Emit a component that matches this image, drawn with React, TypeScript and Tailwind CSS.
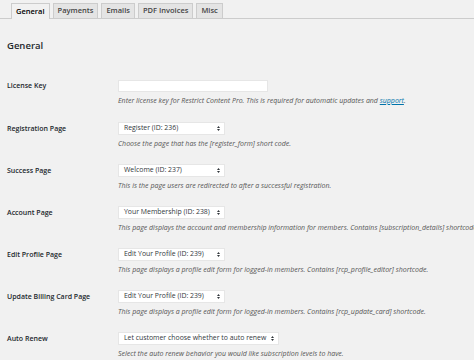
import React from "react";

const tabs = [
  { name: "General", active: true },
  { name: "Payments" },
  { name: "Emails" },
  { name: "PDF Invoices" },
  { name: "Misc" },
];

function Arrows() {
  return (
    <svg width="3" height="5" viewBox="0 0 3 5" className="shrink-0">
      <path d="M1.5 0 L3 2 L0 2 Z" fill="#32373c" />
      <path d="M1.5 5 L3 3 L0 3 Z" fill="#32373c" />
    </svg>
  );
}

function Select({ value, width }: { value: string; width: string }) {
  return (
    <div
      className={`h-[13px] ${width} bg-white border border-[#e6e6e6] flex items-center justify-between pl-[5px] pr-[4px] text-[6.9px] text-[#32373c] leading-none`}
    >
      <span className="whitespace-nowrap">{value}</span>
      <Arrows />
    </div>
  );
}

function Desc({ children }: { children: React.ReactNode }) {
  return (
    <div className="mt-[4px] text-[7px] italic leading-[9px] text-[#555] whitespace-nowrap">
      {children}
    </div>
  );
}

function Row({
  label,
  children,
}: {
  label: string;
  children: React.ReactNode;
}) {
  return (
    <div className="flex h-[42px]">
      <div className="w-[118px] shrink-0 pl-[7px] text-[7px] font-semibold leading-[13px] text-[#23282d] whitespace-nowrap">
        {label}
      </div>
      <div className="flex flex-col">{children}</div>
    </div>
  );
}

export default function App() {
  return (
    <div
      className="w-[474px] h-[360px] overflow-hidden bg-[#f1f1f1]"
      style={{ fontFamily: '"Open Sans", "Liberation Sans", sans-serif' }}
    >
      <div className="flex gap-[3px] pl-[11px] pt-[3px] border-b border-[#cccccc]">
        {tabs.map((t) => (
          <div
            key={t.name}
            className={
              t.active
                ? "h-[16px] px-[4px] -mb-px flex items-center border border-b-0 border-[#cccccc] bg-[#f1f1f1] text-[7.5px] font-semibold text-black whitespace-nowrap"
                : "h-[15px] px-[4px] flex items-center border border-b-0 border-[#cccccc] bg-[#e4e4e4] text-[7.5px] font-semibold text-[#444] whitespace-nowrap"
            }
          >
            {t.name}
          </div>
        ))}
      </div>

      <div className="mt-[21px] pl-[7px] text-[9.5px] font-semibold leading-[12px] text-[#23282d]">
        General
      </div>

      <div className="mt-[28px] flex flex-col">
        <div className="flex h-[42px]">
          <div className="w-[118px] shrink-0 pl-[7px] text-[7px] font-semibold leading-[12px] text-[#23282d] whitespace-nowrap">
            License Key
          </div>
          <div className="flex flex-col">
            <div className="h-[12px] w-[150px] bg-white border border-[#e6e6e6]" />
            <Desc>
              Enter license key for Restrict Content Pro. This is required for
              automatic updates and{" "}
              <span className="text-[#0073aa] underline">support</span>.
            </Desc>
          </div>
        </div>

        <Row label="Registration Page">
          <Select value="Register (ID: 236)" width="w-[107px]" />
          <Desc>Choose the page that has the [register_form] short code.</Desc>
        </Row>

        <Row label="Success Page">
          <Select value="Welcome (ID: 237)" width="w-[107px]" />
          <Desc>
            This is the page users are redirected to after a successful
            registration.
          </Desc>
        </Row>

        <Row label="Account Page">
          <Select value="Your Membership (ID: 238)" width="w-[107px]" />
          <Desc>
            This page displays the account and membership information for
            members. Contains [subscription_details] shortcode.
          </Desc>
        </Row>

        <Row label="Edit Profile Page">
          <Select value="Edit Your Profile (ID: 239)" width="w-[107px]" />
          <Desc>
            This page displays a profile edit form for logged-in members.
            Contains [rcp_profile_editor] shortcode.
          </Desc>
        </Row>

        <Row label="Update Billing Card Page">
          <Select value="Edit Your Profile (ID: 239)" width="w-[107px]" />
          <Desc>
            This page displays a profile edit form for logged-in members.
            Contains [rcp_update_card] shortcode.
          </Desc>
        </Row>

        <Row label="Auto Renew">
          <Select
            value="Let customer choose whether to auto renew"
            width="w-[161px]"
          />
          <Desc>
            Select the auto renew behavior you would like subscription levels to
            have.
          </Desc>
        </Row>
      </div>
    </div>
  );
}
